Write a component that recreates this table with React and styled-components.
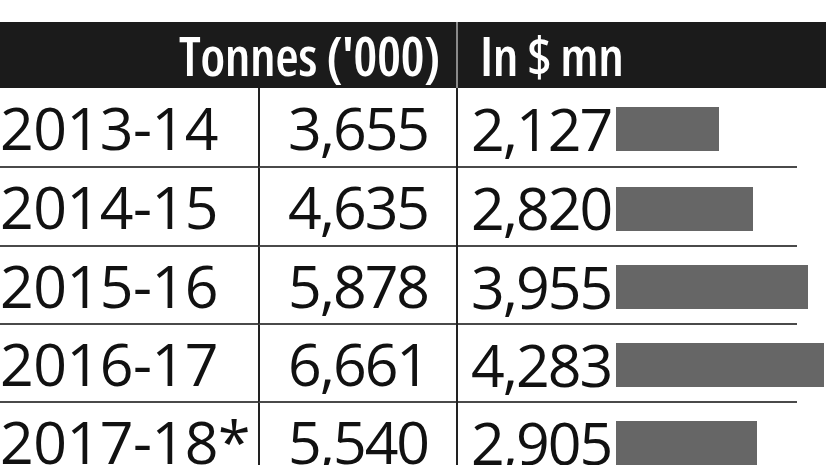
import React from 'react'
import styled, { createGlobalStyle } from 'styled-components'

const Global = createGlobalStyle`
  html, body {
    margin: 0;
    padding: 0;
    background: #ffffff;
    overflow: hidden;
  }
`

const Page = styled.div`
  width: 826px;
  height: 465px;
  padding-top: 22px;
  box-sizing: border-box;
  background: #fff;
  overflow: hidden;
`

const Table = styled.div`
  display: grid;
  grid-template-columns: 258px 198px 370px;
  grid-template-rows: 66px 80px 79px 78px 78px 78px;
`

const HeadCell = styled.div`
  background: #1b1b1b;
  color: #fff;
  font-family: "Open Sans", "Noto Sans", sans-serif;
  font-weight: 600;
  font-stretch: 75%;
  font-size: 54px;
  line-height: 66px;
  letter-spacing: -0.5px;
  white-space: nowrap;
  grid-column: ${p => p.span ? 'span 2' : 'auto'};
  text-align: ${p => p.right ? 'right' : 'left'};
  padding: ${p => p.right ? '0 16px 0 0' : '0 0 0 22px'};
  border-left: ${p => p.divider ? '2px solid #8a8a8a' : 'none'};
  box-sizing: border-box;
`

const Cell = styled.div`
  display: flex;
  align-items: center;
  justify-content: ${p => p.center ? 'center' : 'flex-start'};
  font-family: "Open Sans", "Noto Sans", sans-serif;
  font-weight: 400;
  font-size: 59px;
  line-height: 79px;
  letter-spacing: ${p => p.wide ? '-0.5px' : '-2px'};
  color: #111;
  white-space: nowrap;
  box-sizing: border-box;
  border-bottom: 2px solid #4a4a4a;
  border-left: ${p => p.line ? '2px solid #222' : 'none'};
`

const ValueCell = styled(Cell)`
  border-bottom: none;
  position: relative;
  padding-left: 13px;

  &::after {
    content: '';
    position: absolute;
    left: 0;
    bottom: 0;
    width: 339px;
    height: 2px;
    background: #4a4a4a;
  }
`

const Value = styled.span`
  width: 145px;
  flex: none;
`

const Bar = styled.div`
  flex: none;
  height: 44px;
  margin-top: 2px;
  background: #666666;
`

const rows = [
  { year: '2013-14', tonnes: '3,655', usd: 2127 },
  { year: '2014-15', tonnes: '4,635', usd: 2820 },
  { year: '2015-16', tonnes: '5,878', usd: 3955 },
  { year: '2016-17', tonnes: '6,661', usd: 4283 },
  { year: '2017-18*', tonnes: '5,540', usd: 2905 },
]

const fmt = n => n.toLocaleString('en-US')

export default function App() {
  return (
    <Page>
      <Global />
      <Table>
        <HeadCell span right>Tonnes ('000)</HeadCell>
        <HeadCell divider>In $ mn</HeadCell>
        {rows.map(r => (
          <React.Fragment key={r.year}>
            <Cell wide>{r.year}</Cell>
            <Cell center line>{r.tonnes}</Cell>
            <ValueCell line>
              <Value>{fmt(r.usd)}</Value>
              <Bar style={{ width: Math.round(r.usd * 0.0486) }} />
            </ValueCell>
          </React.Fragment>
        ))}
      </Table>
    </Page>
  )
}
